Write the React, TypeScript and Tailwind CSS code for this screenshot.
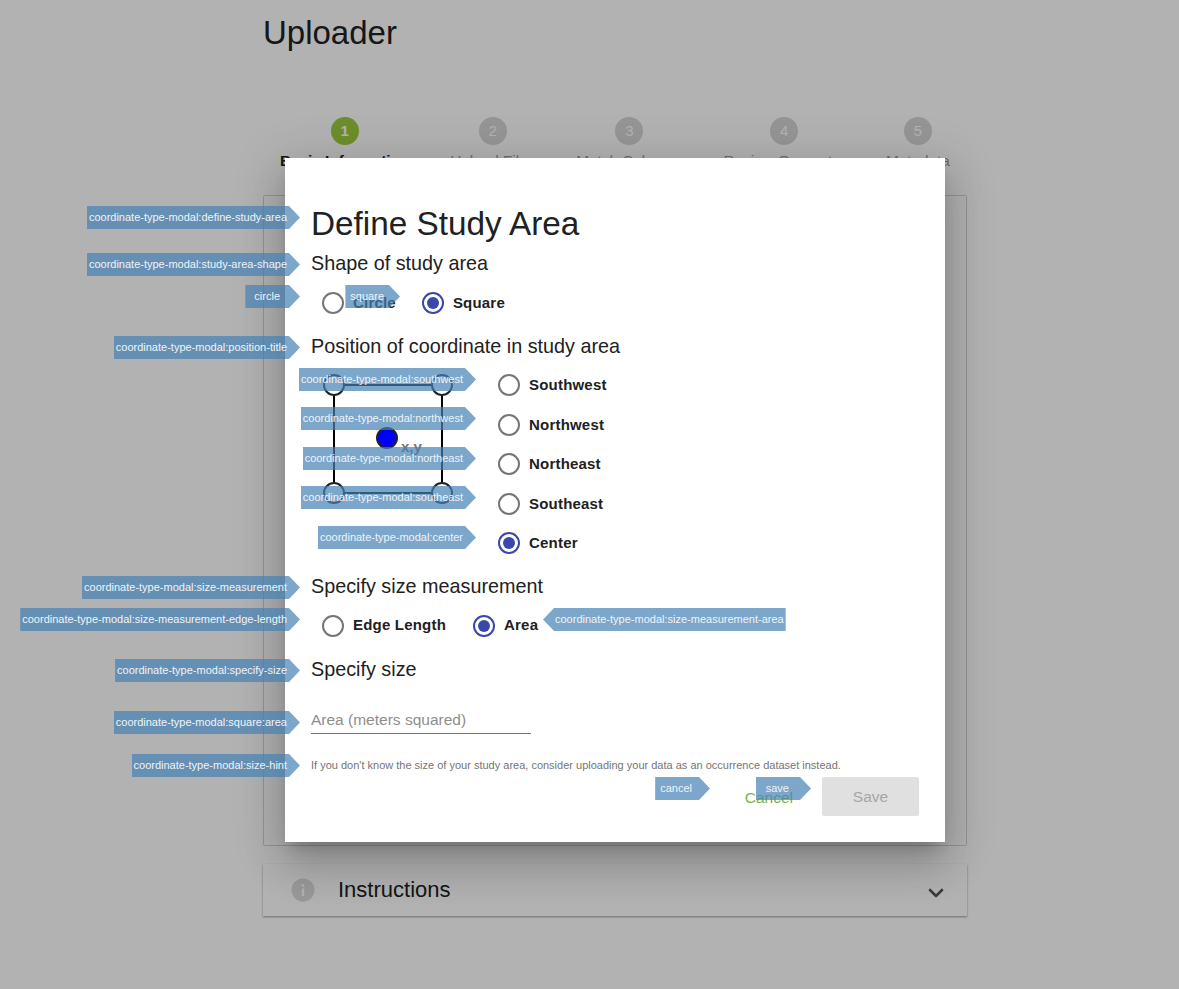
import { ChevronDown } from "lucide-react"

const steps = ["Basic Information", "Upload Files", "Match Columns", "Review Geometry", "Metadata"]
const positions = ["Southwest", "Northwest", "Northeast", "Southeast", "Center"]

function Radio({ label, checked, className }: { label: string; checked?: boolean; className?: string }) {
  return (
    <div className={`flex items-center gap-[9px] ${className ?? ""}`}>
      <div
        className={`flex h-[22px] w-[22px] items-center justify-center rounded-full border-2 ${
          checked ? "border-[#3949ab]" : "border-[#757575]"
        }`}
      >
        {checked && <div className="h-[12px] w-[12px] rounded-full bg-[#3949ab]" />}
      </div>
      <span className="text-[15px] font-bold tracking-[0.2px] text-[#212121]">{label}</span>
    </div>
  )
}

function Tag({ text, className, pad }: { text: string; className: string; pad?: string }) {
  return (
    <div
      className={`absolute flex h-[23px] items-center whitespace-nowrap bg-[rgba(70,130,180,0.7)] text-[11px] text-[#eef3f8] [clip-path:polygon(0_0,calc(100%-11px)_0,100%_50%,calc(100%-11px)_100%,0_100%)] ${
        pad ?? "pl-[2px] pr-[13px]"
      } ${className}`}
    >
      {text}
    </div>
  )
}

function Diagram() {
  return (
    <svg width="130" height="132" viewBox="0 0 130 132" className="shrink-0">
      <rect x="11" y="12" width="108" height="108" fill="none" stroke="#000" strokeWidth="2" />
      <circle cx="11" cy="12" r="10" fill="#fff" stroke="#222" strokeWidth="2" />
      <circle cx="119" cy="12" r="10" fill="#fff" stroke="#222" strokeWidth="2" />
      <circle cx="11" cy="120" r="10" fill="#fff" stroke="#222" strokeWidth="2" />
      <circle cx="119" cy="120" r="10" fill="#fff" stroke="#222" strokeWidth="2" />
      <circle cx="64" cy="65" r="10" fill="#0000ff" stroke="#222" strokeWidth="2" />
      <text x="78" y="79" fontSize="15" fontWeight="700" fill="#757575">
        x,y
      </text>
    </svg>
  )
}

export default function App() {
  return (
    <div className="relative h-[989px] w-[1179px] overflow-hidden bg-white font-['Liberation_Sans',Arial,sans-serif] text-[#212121]">
      {/* Page behind the modal */}
      <div className="ml-[263px] w-[704px]">
        <h1 className="pt-[13px] text-[33px] leading-[40px]">Uploader</h1>
        <div className="mt-[64px] flex gap-[41px] pl-[17px]">
          {steps.map((step, i) => (
            <div key={step} className="flex flex-col items-center">
              <div
                className={`flex h-[28px] w-[28px] items-center justify-center rounded-full text-[15px] ${
                  i === 0 ? "bg-[#9ccc3f] font-bold text-white" : "bg-[#d6d6d6] text-white"
                }`}
              >
                {i + 1}
              </div>
              <div className={`mt-[5px] whitespace-nowrap text-[15.3px] ${i === 0 ? "font-bold" : "text-[#9e9e9e]"}`}>{step}</div>
            </div>
          ))}
        </div>
        <div className="mt-[22px] h-[651px] rounded-[2px] border border-[#d4d4d4]" />
        <div className="mt-[18px] flex h-[52px] items-center justify-between pl-[28px] pr-[19px] shadow-[0_1px_2px_rgba(0,0,0,0.4)]">
          <div className="flex items-center gap-[23px]">
            <svg width="24" height="24" viewBox="0 0 24 24">
              <circle cx="12" cy="12" r="11.5" fill="#dcdcdc" />
              <circle cx="12" cy="7.5" r="1.4" fill="#fff" />
              <rect x="10.8" y="10.5" width="2.4" height="7.5" fill="#fff" />
            </svg>
            <span className="text-[22px]">Instructions</span>
          </div>
          <ChevronDown className="mt-[7px] h-[24px] w-[24px] text-[#555]" strokeWidth={2.6} />
        </div>
      </div>

      <div className="absolute inset-0 bg-black/30" />

      {/* Modal */}
      <div className="absolute left-[285px] top-[158px] h-[684px] w-[660px] bg-white px-[26px] pt-[46px] shadow-[0_11px_15px_-7px_rgba(0,0,0,0.2),0_24px_38px_3px_rgba(0,0,0,0.14),0_9px_46px_8px_rgba(0,0,0,0.12)]">
        <h2 className="text-[33.3px] leading-[40px]">Define Study Area</h2>
        <h3 className="mt-[7px] text-[19.8px] leading-[24px]">Shape of study area</h3>
        <div className="mt-[16px] flex h-[24px] items-center pl-[11px]">
          <Radio label="Circle" />
          <Radio label="Square" checked className="ml-[26px]" />
        </div>
        <h3 className="mt-[19px] text-[19.8px] leading-[24px]">Position of coordinate in study area</h3>
        <div className="mt-[15px] flex pl-[12px]">
          <Diagram />
          <div className="ml-[45px] flex flex-col gap-[17px] pt-[1px]">
            {positions.map((p) => (
              <Radio key={p} label={p} checked={p === "Center"} />
            ))}
          </div>
        </div>
        <h3 className="mt-[19px] text-[19.8px] leading-[24px]">Specify size measurement</h3>
        <div className="mt-[16px] flex h-[24px] items-center pl-[11px]">
          <Radio label="Edge Length" />
          <Radio label="Area" checked className="ml-[27px]" />
        </div>
        <h3 className="mt-[19px] text-[19.8px] leading-[24px]">Specify size</h3>
        <div className="mt-[28px] w-[220px] border-b border-[#757575] pb-[2px] text-[15.5px] leading-[22px] text-[#8e8e8e]">
          Area (meters squared)
        </div>
        <p className="mt-[25px] text-[11px] leading-[13px] text-[#757575]">
          If you don't know the size of your study area, consider uploading your data as an occurrence dataset instead.
        </p>
        <div className="mt-[5px] flex items-center justify-end">
          <span className="mr-[29px] pt-[3px] text-[15.5px] text-[#7cb342]">Cancel</span>
          <div className="flex h-[39px] w-[97px] items-center justify-center rounded-[2px] bg-[#e0e0e0] pt-[1px] text-[15.5px] text-[#a6a6a6]">
            Save
          </div>
        </div>
      </div>

      {/* Annotation tags */}
      <Tag text="coordinate-type-modal:define-study-area" className="right-[879px] top-[206px]" />
      <Tag text="coordinate-type-modal:study-area-shape" className="right-[879px] top-[253px]" />
      <Tag text="circle" pad="pl-[9px] pr-[20px]" className="right-[879px] top-[285px]" />
      <Tag text="square" pad="pl-[5px] pr-[16px]" className="right-[779px] top-[285px]" />
      <Tag text="coordinate-type-modal:position-title" className="right-[879px] top-[336px]" />
      <Tag text="coordinate-type-modal:southwest" className="right-[703px] top-[368px]" />
      <Tag text="coordinate-type-modal:northwest" className="right-[703px] top-[407px]" />
      <Tag text="coordinate-type-modal:northeast" className="right-[703px] top-[447px]" />
      <Tag text="coordinate-type-modal:southeast" className="right-[703px] top-[486px]" />
      <Tag text="coordinate-type-modal:center" className="right-[703px] top-[526px]" />
      <Tag text="coordinate-type-modal:size-measurement" className="right-[879px] top-[576px]" />
      <Tag text="coordinate-type-modal:size-measurement-edge-length" className="right-[879px] top-[608px]" />
      <div className="absolute left-[543px] top-[608px] flex h-[23px] items-center whitespace-nowrap bg-[rgba(70,130,180,0.7)] pl-[12px] pr-[2px] text-[11px] text-[#eef3f8] [clip-path:polygon(11px_0,100%_0,100%_100%,11px_100%,0_50%)]">
        coordinate-type-modal:size-measurement-area
      </div>
      <Tag text="coordinate-type-modal:specify-size" className="right-[879px] top-[659px]" />
      <Tag text="coordinate-type-modal:square:area" className="right-[879px] top-[711px]" />
      <Tag text="coordinate-type-modal:size-hint" className="right-[879px] top-[754px]" />
      <Tag text="cancel" pad="pl-[5px] pr-[18px]" className="right-[469px] top-[777px]" />
      <Tag text="save" pad="pl-[10px] pr-[22px]" className="right-[368px] top-[777px]" />
    </div>
  )
}
